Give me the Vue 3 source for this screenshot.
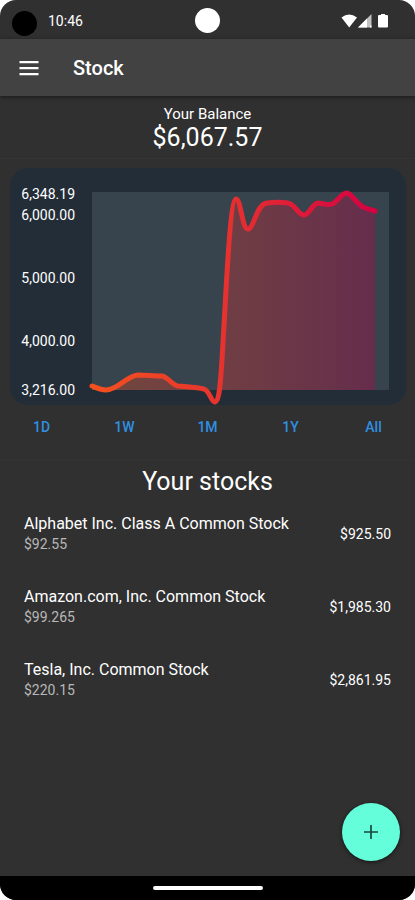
<template>
  <div class="screen">
    <header class="status-bar">
      <div class="status-left">
        <span class="dot"></span>
        <span>10:46</span>
      </div>
      <span class="camera"></span>
      <svg class="status-icons" width="48" height="16" viewBox="0 0 48 16" fill="#fff" aria-hidden="true">
        <path d="M0.500 4.500Q8 -1.500 16 4.500L8.200 14.500Z" />
        <path d="M17 14.500L30.500 1V14.500Z" opacity="0.7" />
        <path d="M17 14.500L26 5.500V14.500ZM29 12.500h1.500v2H29Z" />
        <path d="M38 2h2V1h4v1h2q1 0 1 1v10.500q0 1-1 1h-8q-1 0-1-1V3q0-1 1-1Z" />
      </svg>
    </header>

    <nav class="app-bar">
      <button class="menu-btn" aria-label="Menu">
        <svg width="24" height="24" viewBox="0 0 24 24" fill="#fff">
          <path d="M2.500 5h19v2.200h-19zM2.500 11h19v2.200h-19zM2.500 17h19v2.200h-19z" />
        </svg>
      </button>
      <h1>Stock</h1>
    </nav>

    <main>
      <section class="balance">
        <p class="balance-label">Your Balance</p>
        <p class="balance-value">$6,067.57</p>
      </section>

      <section class="chart-card">
        <svg class="chart" viewBox="0 0 396 237" role="img" aria-label="Balance">
          <defs>
            <linearGradient id="lineColor" gradientUnits="userSpaceOnUse" x1="0" y1="0" x2="284" y2="0">
              <stop offset="0" stop-color="#f4511e" />
              <stop offset="0.5" stop-color="#e53030" />
              <stop offset="1" stop-color="#d50042" />
            </linearGradient>
            <linearGradient id="areaColor" gradientUnits="userSpaceOnUse" x1="0" y1="0" x2="284" y2="0">
              <stop offset="0" stop-color="#f4511e" />
              <stop offset="0.5" stop-color="#e53030" />
              <stop offset="1" stop-color="#c9004a" />
            </linearGradient>
            <clipPath id="plotClip">
              <rect width="297" height="198" />
            </clipPath>
          </defs>
          <text v-for="tick in ticks" :key="tick.label" x="65" :y="tick.y" class="tick">{{ tick.label }}</text>
          <g transform="translate(82 24)">
            <rect width="297" height="198" fill="#37434d" />
            <path :d="line + ' V198 H0 Z'" fill="url(#areaColor)" fill-opacity="0.32" clip-path="url(#plotClip)" />
            <path :d="line" class="line" stroke="url(#lineColor)" />
          </g>
        </svg>
      </section>

      <div class="ranges">
        <button v-for="range in ranges" :key="range">{{ range }}</button>
      </div>

      <section class="stocks">
        <h2>Your stocks</h2>
        <ul>
          <li v-for="stock in stocks" :key="stock.name">
            <div>
              <p class="name">{{ stock.name }}</p>
              <p class="price">{{ stock.price }}</p>
            </div>
            <span class="total">{{ stock.total }}</span>
          </li>
        </ul>
      </section>
    </main>

    <button class="fab" aria-label="Add stock">
      <svg width="24" height="24" viewBox="0 0 24 24" stroke="#16483d" stroke-width="1.700">
        <path d="M12 5v14M5 12h14" />
      </svg>
    </button>

    <footer class="nav-bar"><span></span></footer>
  </div>
</template>

<script setup>
const ticks = [
  { label: '6,348.19', y: 31 },
  { label: '6,000.00', y: 52 },
  { label: '5,000.00', y: 115 },
  { label: '4,000.00', y: 178 },
  { label: '3,216.00', y: 227 },
]

// balance curve, in plot coordinates
const line = [
  'M0 194',
  'C5 196 9 198 14 198',
  'C26 198 34 184 46 183',
  'C54 183 62 184 70 184',
  'C76 185 80 193 86 194',
  'C95 195 104 195 112 197',
  'C118 199 119 210 123 210',
  'C127 209 128 194 129 182',
  'C133 130 137 7 144 7',
  'C149 7 150 37 156 37',
  'C162 37 164 12 175 11',
  'C182 10 190 10 196 11',
  'C203 12 206 23 212 23',
  'C217 23 220 12 226 11',
  'C231 11 235 14 240 12',
  'C246 10 249 1 255 1',
  'C260 2 264 11 271 15',
  'Q276 17 283 19',
].join(' ')

const ranges = ['1D', '1W', '1M', '1Y', 'All']

const stocks = [
  { name: 'Alphabet Inc. Class A Common Stock', price: '$92.55', total: '$925.50' },
  { name: 'Amazon.com, Inc. Common Stock', price: '$99.265', total: '$1,985.30' },
  { name: 'Tesla, Inc. Common Stock', price: '$220.15', total: '$2,861.95' },
]
</script>

<style>
body {
  background: #fff;
}
</style>

<style scoped>
.screen {
  position: relative;
  display: flex;
  flex-direction: column;
  min-height: 100vh;
  overflow: hidden;
  border-radius: 16px;
  background: #303030;
  color: #fff;
  font-family: Roboto, sans-serif;
}

h1, h2, p, ul {
  margin: 0;
  padding: 0;
  font-weight: 400;
}

button {
  border: 0;
  padding: 0;
  background: none;
  font-family: inherit;
  cursor: pointer;
}

.status-bar {
  display: grid;
  grid-template-columns: 1fr auto 1fr;
  align-items: center;
  height: 39px;
  padding: 2px 26px 0 12px;
  box-sizing: border-box;
  font-size: 14px;
}

.status-left {
  display: flex;
  align-items: center;
  gap: 11px;
}

.dot {
  width: 25px;
  height: 25px;
  margin-top: 6px;
  border-radius: 50%;
  background: #000;
}

.camera {
  width: 25px;
  height: 25px;
  margin-left: 14px;
  border-radius: 50%;
  background: #fff;
}

.status-icons {
  justify-self: end;
}

.app-bar {
  display: flex;
  align-items: center;
  gap: 32px;
  height: 57px;
  padding: 0 17px;
  background: #424242;
  box-shadow: 0 1px 4px rgba(0, 0, 0, .5);
}

.menu-btn {
  display: flex;
}

.app-bar h1 {
  font-size: 20px;
  font-weight: 500;
}

.balance {
  padding: 9px 0 5px;
  border-bottom: 1px solid #353535;
  text-align: center;
}

.balance-label {
  font-size: 15px;
  line-height: 18px;
}

.balance-value {
  font-size: 25px;
  line-height: 30px;
}

.chart-card {
  margin: 9px 9px 0 10px;
  border-radius: 18px;
  background: #232d37;
}

.chart {
  display: block;
  width: 100%;
}

.tick {
  fill: #fff;
  font-size: 14px;
  text-anchor: end;
}

.line {
  fill: none;
  stroke-width: 5;
  stroke-linecap: round;
  stroke-linejoin: round;
}

.ranges {
  display: grid;
  grid-template-columns: repeat(5, 1fr);
  height: 54px;
  border-bottom: 1px solid #333;
}

.ranges button {
  padding-bottom: 10px;
  color: #2f8fe0;
  font-size: 14px;
  font-weight: 500;
}

.stocks h2 {
  padding-top: 6px;
  font-size: 25px;
  line-height: 31px;
  text-align: center;
}

.stocks li {
  display: flex;
  justify-content: space-between;
  align-items: center;
  height: 73px;
  padding: 0 24px;
  font-size: 14px;
}

.name {
  font-size: 16px;
  line-height: 21px;
}

.price {
  color: #b8b8b8;
  line-height: 20px;
}

.fab {
  position: absolute;
  right: 15px;
  bottom: 39px;
  display: flex;
  align-items: center;
  justify-content: center;
  width: 58px;
  height: 58px;
  border-radius: 50%;
  background: #64ffda;
  box-shadow: 0 1px 4px rgba(0, 0, 0, .6);
}

.nav-bar {
  display: flex;
  align-items: center;
  justify-content: center;
  height: 24px;
  margin-top: auto;
  background: #000;
}

.nav-bar span {
  width: 110px;
  height: 4px;
  border-radius: 2px;
  background: #fff;
}
</style>
